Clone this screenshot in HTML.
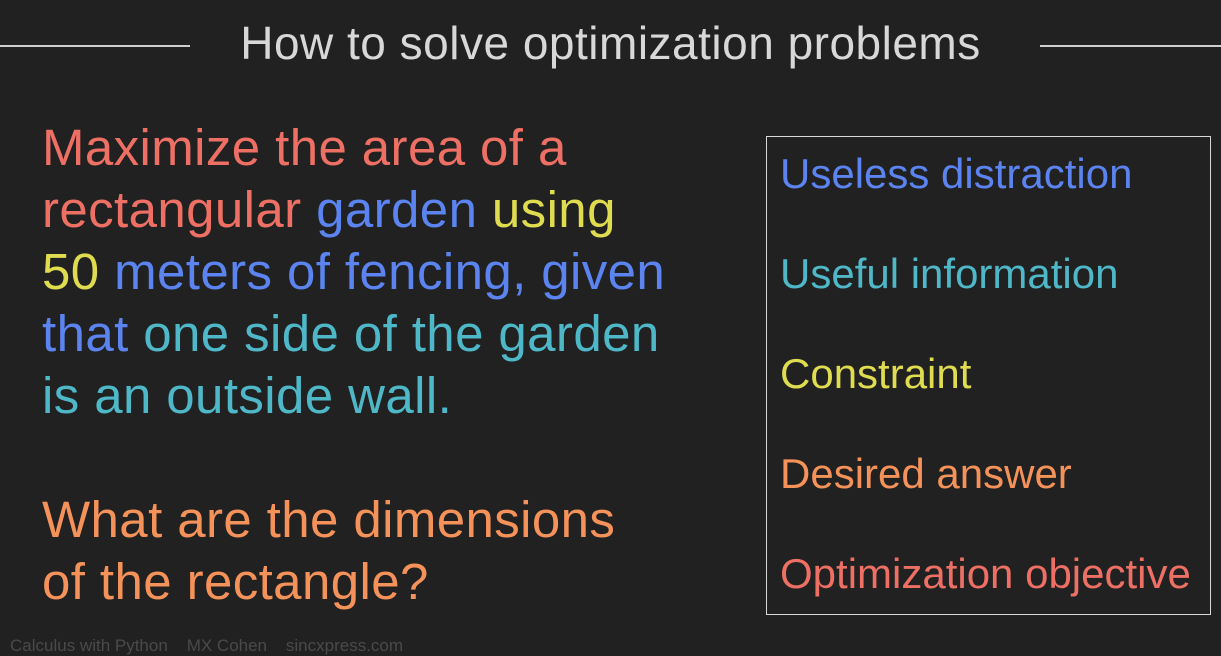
<!DOCTYPE html>
<html><head><style>
body{margin:0;width:1221px;height:646px;background:#212121;overflow:hidden;position:relative;font-family:"Liberation Sans",sans-serif}
.t{position:absolute;left:0;width:1221px;top:16px;text-align:center;color:#d8d8d8;font-size:46px;font-weight:300;letter-spacing:0.5px}
.l{position:absolute;top:45px;height:2px;background:#cfcfcf}
.m{position:absolute;left:42px;top:117px;font-size:51px;line-height:62px;color:#ee7065;white-space:nowrap;letter-spacing:0.4px}
.box{position:absolute;left:766px;top:136px;width:443px;height:477px;border:1.5px solid #d8d8d8}
.i{position:absolute;left:780px;font-size:42px;white-space:nowrap}
.r{color:#ee7065}.b{color:#5b84f0}.y{color:#e0dc50}.c{color:#4fb8c8}.o{color:#f5925a}
.f{position:absolute;left:10px;top:636px;font-size:17px;color:#4a4a4a}
</style></head><body>
<div class="l" style="left:0;width:190px"></div>
<div class="l" style="left:1040px;width:181px"></div>
<div class="t">How to solve optimization problems</div>
<div class="m">Maximize the area of a<br>rectangular <span class="b">garden</span> <span class="y">using</span><br><span class="y">50</span> <span class="b">meters of fencing, given</span><br><span class="b">that</span> <span class="c">one side of the garden</span><br><span class="c">is an outside wall.</span><br><br><span class="o">What are the dimensions<br>of the rectangle?</span></div>
<div class="box"></div>
<div class="i b" style="top:150px">Useless distraction</div>
<div class="i c" style="top:250px">Useful information</div>
<div class="i y" style="top:350px">Constraint</div>
<div class="i o" style="top:450px">Desired answer</div>
<div class="i r" style="top:550px">Optimization objective</div>
<div class="f">Calculus with Python &nbsp;&nbsp; MX Cohen &nbsp;&nbsp; sincxpress.com</div>
</body></html>
